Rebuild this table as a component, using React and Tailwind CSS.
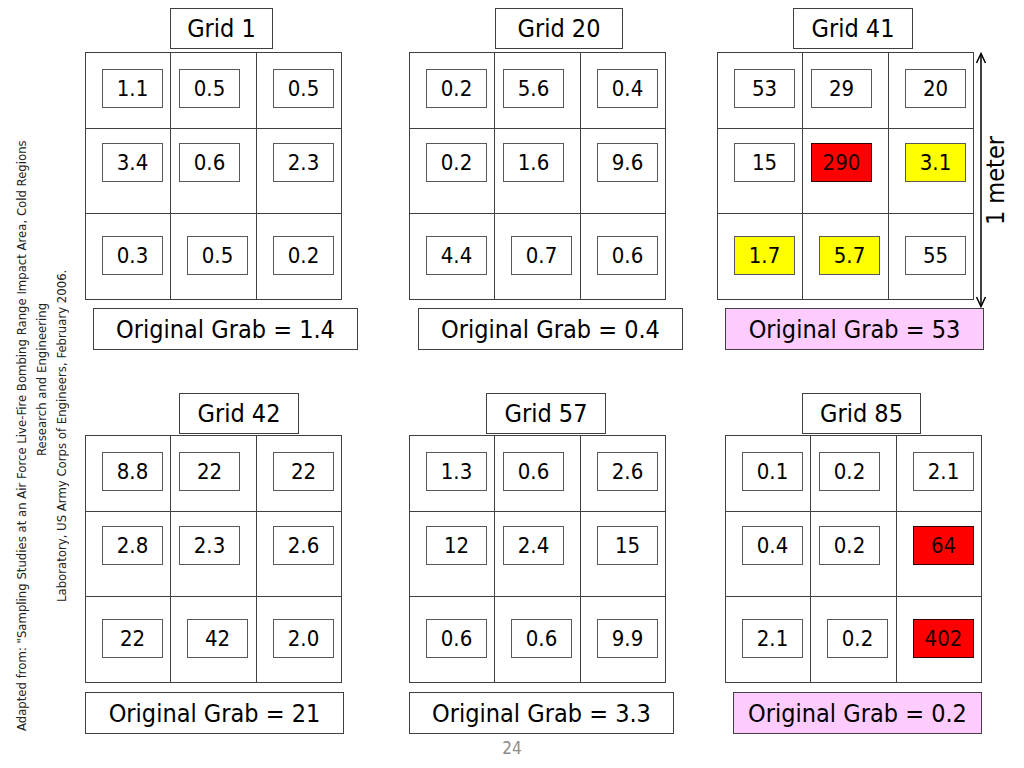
const SANS = "font-['DejaVu_Sans_Condensed','DejaVu_Sans',sans-serif]";

const PANELS_TOP = [
  {
    title: 'Grid 1',
    panelCls: '',
    titleCls: 'ml-[85px] w-[103px]',
    grabCls: 'ml-[8px] w-[265px] bg-white',
    grab: '1.4',
    cells: [['1.1', '0.5', '0.5'], ['3.4', '0.6', '2.3'], ['0.3', '0.5', '0.2']],
  },
  {
    title: 'Grid 20',
    panelCls: 'ml-[67px]',
    titleCls: 'ml-[86px] w-[128px]',
    grabCls: 'ml-[9px] w-[265px] bg-white',
    grab: '0.4',
    cells: [['0.2', '5.6', '0.4'], ['0.2', '1.6', '9.6'], ['4.4', '0.7', '0.6']],
  },
  {
    title: 'Grid 41',
    panelCls: 'ml-[51px]',
    titleCls: 'ml-[76px] w-[120px]',
    grabCls: 'ml-[8px] w-[259px] bg-[#ffccff]',
    grab: '53',
    meter: true,
    cells: [['53', '29', '20'], ['15', '290:r', '3.1:y'], ['1.7:y', '5.7:y', '55']],
  },
];

const PANELS_BOTTOM = [
  {
    title: 'Grid 42',
    panelCls: '',
    titleCls: 'ml-[94px] w-[120px]',
    grabCls: 'ml-0 w-[259px] bg-white',
    grab: '21',
    cells: [['8.8', '22', '22'], ['2.8', '2.3', '2.6'], ['22', '42', '2.0']],
  },
  {
    title: 'Grid 57',
    panelCls: 'ml-[67px]',
    titleCls: 'ml-[77px] w-[120px]',
    grabCls: 'ml-0 w-[265px] bg-white',
    grab: '3.3',
    cells: [['1.3', '0.6', '2.6'], ['12', '2.4', '15'], ['0.6', '0.6', '9.9']],
  },
  {
    title: 'Grid 85',
    panelCls: 'ml-[59px]',
    titleCls: 'ml-[77px] w-[119px]',
    grabCls: 'ml-[8px] w-[249px] bg-[#ffccff]',
    grab: '0.2',
    cells: [['0.1', '0.2', '2.1'], ['0.4', '0.2', '64:r'], ['2.1', '0.2', '402:r']],
  },
];

const ROW_PAD = ['pt-[16px]', 'pt-[14px]', 'pt-[22px]'];

function Sample({ raw }) {
  const [value, flag] = raw.split(':');
  let tone = 'bg-white border-[#595959] text-black';
  if (flag === 'r') tone = 'bg-[#ff0000] border-[#3a0000] text-[#1a0000]';
  if (flag === 'y') tone = 'bg-[#ffff00] border-[#595959] text-black';
  return (
    <div className={`w-[61px] h-[39px] border flex items-center justify-center text-[22px] leading-none ${tone}`}>
      {value}
    </div>
  );
}

function MeterMark() {
  return (
    <>
      <svg className="absolute left-[258px] top-0 w-[12px] h-[256px]" viewBox="0 0 12 256">
        <line x1="6" y1="2" x2="6" y2="254" stroke="#000" strokeWidth="1.5" />
        <path d="M1.5 11 L6 1.5 L10.5 11" fill="none" stroke="#000" strokeWidth="1.5" />
        <path d="M1.5 245 L6 254.5 L10.5 245" fill="none" stroke="#000" strokeWidth="1.5" />
      </svg>
      <div className="absolute left-[266px] top-[84px] [writing-mode:vertical-rl] rotate-180 text-[25px] leading-[25px] whitespace-nowrap">
        1 meter
      </div>
    </>
  );
}

function Panel({ p, top }) {
  return (
    <div className={`w-[257px] flex flex-col items-start ${p.panelCls}`}>
      <div className={`h-[41px] border border-[#404040] flex items-center justify-center text-[25px] leading-none ${p.titleCls}`}>
        {p.title}
      </div>
      <div className={`relative ${top ? 'mt-[3px]' : 'mt-[1px]'}`}>
        <div className="grid grid-cols-[85px_86px_85px] grid-rows-[76px_85px_86px] border-l border-t border-[#404040]">
          {p.cells.map((row, r) =>
            row.map((raw, c) => (
              <div
                key={`${r}-${c}`}
                className={`border-r border-b border-[#404040] ${ROW_PAD[r]} ${c === 1 && r < 2 ? 'pl-[8px]' : 'pl-[16px]'}`}
              >
                <Sample raw={raw} />
              </div>
            ))
          )}
        </div>
        {p.meter && <MeterMark />}
      </div>
      <div className={`h-[42px] border border-[#404040] flex items-center justify-center text-[25px] leading-none ${top ? 'mt-[8px]' : 'mt-[9px]'} ${p.grabCls}`}>
        Original Grab = {p.grab}
      </div>
    </div>
  );
}

export default function App() {
  return (
    <div className={`w-[1024px] h-[768px] bg-white text-black flex overflow-hidden ${SANS}`}>
      {/* source note, reads bottom to top */}
      <div className="w-[85px] shrink-0 pl-[12px] pt-[136px]">
        <div className="h-[600px] [writing-mode:vertical-rl] rotate-180 text-center text-[13px] leading-[20px] text-[#222] font-['Liberation_Sans_Narrow','DejaVu_Sans_Condensed',sans-serif] whitespace-nowrap">
          <div>Adapted from: "Sampling Studies at an Air Force Live-Fire Bombing Range Impact Area, Cold Regions</div>
          <div className="pt-[114px]">Research and Engineering</div>
          <div>Laboratory, US Army Corps of Engineers, February 2006.</div>
        </div>
      </div>

      <div className="flex-1 flex flex-col pt-[8px]">
        <div className="flex">
          {PANELS_TOP.map((p) => (
            <Panel key={p.title} p={p} top />
          ))}
        </div>
        <div className="flex mt-[43px]">
          {PANELS_BOTTOM.map((p) => (
            <Panel key={p.title} p={p} />
          ))}
        </div>
        <div className="mt-[4px] -ml-[85px] text-center text-[17px] leading-[20px] text-[#8c8c8c]">24</div>
      </div>
    </div>
  );
}
